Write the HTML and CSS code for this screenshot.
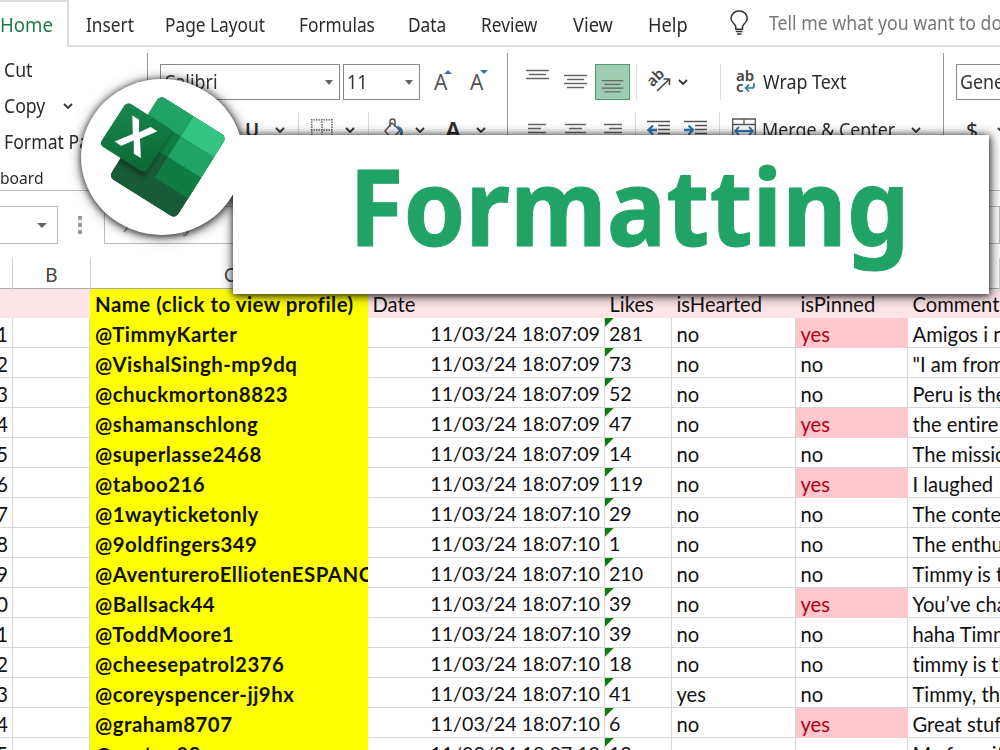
FILE: index.html
```
<!DOCTYPE html>
<html lang="en">
<head>
<meta charset="utf-8">
<title>Formatting</title>
<link rel="stylesheet" href="styles.css">
</head>
<body>
<div class="app">
  <nav class="tabs">
    <a class="tab active"><span>Home</span></a>
    <a class="tab"><span>Insert</span></a>
    <a class="tab"><span>Page Layout</span></a>
    <a class="tab"><span>Formulas</span></a>
    <a class="tab"><span>Data</span></a>
    <a class="tab"><span>Review</span></a>
    <a class="tab view"><span>View</span></a>
    <a class="tab view"><span>Help</span></a>
    <svg class="bulb" width="39" height="47" viewBox="0 0 39 47" fill="none" stroke="#333" stroke-width="1.6"><path d="M5.200 30.500v-2.500c0-2.400-5-4.500-5-8.800a8.400 7.700 0 0 1 17 0c0 4.300-5 6.400-5 8.800v2.500zM5.200 33h7M6.500 35.500h4.600"/></svg>
    <a class="tell"><span>Tell me what you want to do</span></a>
  </nav>

  <section class="ribbon">
    <div class="group clipboard">
      <div class="line"><span>Cut</span></div>
      <div class="line"><span>Copy</span><svg class="chev" width="10" height="6" viewBox="0 0 10 6"><path d="M1 1l4 4 4-4"/></svg></div>
      <div class="line"><span>Format Painter</span></div>
      <div class="line caption"><span>board</span></div>
    </div>

    <div class="group font">
      <div class="row">
        <div class="box face"><span>Calibri</span><i class="arrow"></i></div>
        <div class="box size"><span>11</span><i class="arrow"></i></div>
        <div class="glyph grow">A<svg width="8" height="4" viewBox="0 0 8 4"><path d="M0 4L4 0l4 4z"/></svg></div>
        <div class="glyph shrink">A<svg width="8" height="4" viewBox="0 0 8 4"><path d="M0 0l4 4 4-4z"/></svg></div>
      </div>
      <div class="row second">
        <b class="under">U</b>
        <svg class="chev" width="10" height="6" viewBox="0 0 10 6"><path d="M1 1l4 4 4-4"/></svg>
        <i class="sep"></i>
        <svg width="22" height="22" viewBox="0 0 22 22" fill="none" stroke="#555" stroke-width="1.300" stroke-dasharray="1.500 1"><path d="M.8 0v22M11 0v22M21 0v22M0 .8h22M0 11h22"/></svg>
        <svg class="chev" width="10" height="6" viewBox="0 0 10 6"><path d="M1 1l4 4 4-4"/></svg>
        <i class="sep"></i>
        <svg class="bucket" width="21" height="24" viewBox="0 0 21 24" fill="none"><path d="M6 9V3.500Q6 1 8.500 1T11 3.500V9M8 5L1 13l7 8 8-8.500z" stroke="#555" stroke-width="1.500"/><path d="M12 8q7 0 7 7 0 3-2 6-2.500-2-.5-8z" fill="#2e74b5"/></svg>
        <svg class="chev" width="10" height="6" viewBox="0 0 10 6"><path d="M1 1l4 4 4-4"/></svg>
        <b class="color">A</b>
        <svg class="chev" width="10" height="6" viewBox="0 0 10 6"><path d="M1 1l4 4 4-4"/></svg>
      </div>
    </div>

    <div class="group align">
      <div class="row">
        <svg class="lines" width="24" height="36" viewBox="0 0 24 36"><path d="M1 6.500h23M4 10.500h17M1 14.500h23"/></svg>
        <svg class="lines" width="24" height="36" viewBox="0 0 24 36"><path d="M1 11.500h23M4 15.500h17M1 19.500h23M4 23.500h17"/></svg>
        <svg class="lines on" width="35" height="36" viewBox="0 0 35 36"><path d="M6 16.500h23M9 20.500h17M6 24.500h23M9 28.500h17"/></svg>
        <i class="sep"></i>
        <svg class="orient" width="26" height="24" viewBox="0 0 26 24"><text x="0" y="0" transform="translate(5.500 17.500) rotate(-45)">ab</text><path d="M10 21L22 9.500M16.500 9h6v6" fill="none" stroke="#444" stroke-width="1.600"/></svg>
        <svg class="chev" width="10" height="6" viewBox="0 0 10 6"><path d="M1 1l4 4 4-4"/></svg>
        <i class="sep tall"></i>
        <svg class="wrap" width="21" height="24" viewBox="0 0 21 24"><text x="0" y="11">ab</text><text x="0" y="22">c</text><path d="M18 13v3q0 2-2 2h-6M13 14.500L9.500 18l3.500 3.500" fill="none" stroke="#2e74b5" stroke-width="1.700"/></svg>
        <span class="label">Wrap Text</span>
      </div>
      <div class="row second">
        <svg class="lines" width="24" height="22" viewBox="0 0 24 22"><path d="M3 5.500h18M3 9.500h13M3 13.500h18"/></svg>
        <svg class="lines" width="24" height="22" viewBox="0 0 24 22"><path d="M2 5.500h21M6 9.500h13M2 13.500h21"/></svg>
        <svg class="lines right" width="24" height="22" viewBox="0 0 24 22"><path d="M3 5.500h18M8 9.500h13M3 13.500h18"/></svg>
        <i class="sep"></i>
        <svg class="indent" width="23" height="22" viewBox="0 0 23 22"><path d="M0 2.500h23M11 6.500h12M11 10.500h12M11 14.500h12" stroke="#555" stroke-width="1.500"/><path d="M10 11H2M6 6.500L1.500 11 6 15.500" fill="none" stroke="#2e74b5" stroke-width="2.400"/></svg>
        <svg class="indent" width="23" height="22" viewBox="0 0 23 22"><path d="M0 2.500h23M11 6.500h12M11 10.500h12M11 14.500h12" stroke="#555" stroke-width="1.500"/><path d="M0 11h8M4.500 6.500L9 11l-4.500 4.500" fill="none" stroke="#2e74b5" stroke-width="2.400"/></svg>
        <i class="sep tall"></i>
        <svg class="merge" width="24" height="24" viewBox="0 0 24 24" fill="none" stroke="#555" stroke-width="1.300"><path d="M.7 23V1h22.600v22M.7 6.500h22.600M12 1v5.500"/><path d="M3 13h18M7 9l-4 4 4 4M17 9l4 4-4 4" stroke="#2e74b5" stroke-width="1.800"/></svg>
        <span class="label">Merge &amp; Center</span>
        <svg class="chev" width="10" height="6" viewBox="0 0 10 6"><path d="M1 1l4 4 4-4"/></svg>
      </div>
    </div>

    <div class="group number">
      <div class="row"><div class="box general"><span>General</span></div></div>
      <div class="row second"><span class="dollar">$</span><svg class="chev" width="10" height="6" viewBox="0 0 10 6"><path d="M1 1l4 4 4-4"/></svg></div>
    </div>
  </section>

  <section class="formula">
    <div class="namebox"><i class="arrow"></i></div>
    <div class="dots"><i></i><i></i><i></i></div>
    <div class="fx"><svg width="90" height="24" viewBox="0 0 90 24" fill="none" stroke="#999" stroke-width="2"><path d="M11 10L6 17M65 20q3 2 5-4"/></svg></div>
  </section>

  <div class="colheads"><span></span><span>B</span><span>C</span></div>

  <table class="sheet">
    <colgroup><col class="c-a"><col class="c-b"><col class="c-name"><col class="c-date"><col class="c-likes"><col class="c-heart"><col class="c-pin"><col class="c-com"></colgroup>
    <thead>
      <tr><th></th><th></th><th class="name">Name (click to view profile)</th><th>Date</th><th>Likes</th><th>isHearted</th><th>isPinned</th><th>Comment</th></tr>
    </thead>
    <tbody>
      <tr><td>1</td><td></td><td>@TimmyKarter</td><td>11/03/24 18:07:09</td><td>281</td><td>no</td><td class="yes">yes</td><td>Amigos i no</td></tr>
      <tr><td>2</td><td></td><td>@VishalSingh-mp9dq</td><td>11/03/24 18:07:09</td><td>73</td><td>no</td><td>no</td><td>"I am from</td></tr>
      <tr><td>3</td><td></td><td>@chuckmorton8823</td><td>11/03/24 18:07:09</td><td>52</td><td>no</td><td>no</td><td>Peru is the</td></tr>
      <tr><td>4</td><td></td><td>@shamanschlong</td><td>11/03/24 18:07:09</td><td>47</td><td>no</td><td class="yes">yes</td><td>the entire</td></tr>
      <tr><td>5</td><td></td><td>@superlasse2468</td><td>11/03/24 18:07:09</td><td>14</td><td>no</td><td>no</td><td>The mission</td></tr>
      <tr><td>6</td><td></td><td>@taboo216</td><td>11/03/24 18:07:09</td><td>119</td><td>no</td><td class="yes">yes</td><td>I laughed</td></tr>
      <tr><td>7</td><td></td><td>@1wayticketonly</td><td>11/03/24 18:07:10</td><td>29</td><td>no</td><td>no</td><td>The content</td></tr>
      <tr><td>8</td><td></td><td>@9oldfingers349</td><td>11/03/24 18:07:10</td><td>1</td><td>no</td><td>no</td><td>The enthusiasm</td></tr>
      <tr><td>9</td><td></td><td>@AventureroElliotenESPANOL</td><td>11/03/24 18:07:10</td><td>210</td><td>no</td><td>no</td><td>Timmy is the</td></tr>
      <tr><td>10</td><td></td><td>@Ballsack44</td><td>11/03/24 18:07:10</td><td>39</td><td>no</td><td class="yes">yes</td><td>You’ve changed</td></tr>
      <tr><td>11</td><td></td><td>@ToddMoore1</td><td>11/03/24 18:07:10</td><td>39</td><td>no</td><td>no</td><td>haha Timmy</td></tr>
      <tr><td>12</td><td></td><td>@cheesepatrol2376</td><td>11/03/24 18:07:10</td><td>18</td><td>no</td><td>no</td><td>timmy is the</td></tr>
      <tr><td>13</td><td></td><td>@coreyspencer-jj9hx</td><td>11/03/24 18:07:10</td><td>41</td><td>yes</td><td>no</td><td>Timmy, this</td></tr>
      <tr><td>14</td><td></td><td>@graham8707</td><td>11/03/24 18:07:10</td><td>6</td><td>no</td><td class="yes">yes</td><td>Great stuff</td></tr>
      <tr><td>15</td><td></td><td>@gaston98</td><td>11/03/24 18:07:10</td><td>12</td><td>no</td><td>no</td><td>My favorite</td></tr>
    </tbody>
  </table>

  <div class="overlay">
    <div class="disc">
      <svg width="162" height="156" viewBox="81 79 162 156">
        <defs>
          <clipPath id="sheet"><rect width="100" height="100" rx="7"/></clipPath>
          <linearGradient id="tile" x1="0" y1="0" x2="1" y2="1"><stop offset="0" stop-color="#18884f"/><stop offset="1" stop-color="#0b6631"/></linearGradient>
          <filter id="soft" x="-30%" y="-30%" width="160%" height="160%"><feGaussianBlur stdDeviation="3"/></filter>
        </defs>
        <g transform="matrix(.670 .420 -.515 .820 160 95)" clip-path="url(#sheet)">
          <rect width="100" height="100" fill="#185c37"/>
          <rect width="50" height="25" fill="#21a366"/>
          <rect x="50" width="50" height="25" fill="#33c481"/>
          <rect y="25" width="50" height="25" fill="#107c41"/>
          <rect x="50" y="25" width="50" height="25" fill="#21a366"/>
          <rect x="50" y="50" width="50" height="25" fill="#107c41"/>
          <rect x="-20" y="27" width="58" height="54" fill="#000" opacity=".35" filter="url(#soft)"/>
        </g>
        <g transform="matrix(.460 .290 -.280 .430 127 101.500)">
          <rect width="100" height="100" rx="9" fill="url(#tile)"/>
          <text class="mark" x="50" y="79" text-anchor="middle">X</text>
        </g>
      </svg>
    </div>
    <div class="banner"><h1>Formatting</h1></div>
  </div>
</div>
</body>
</html>
```
FILE: styles.css
```
* { box-sizing: border-box; }
body { margin: 0; width: 1000px; height: 750px; overflow: hidden; background: #fff; }
.app { position: relative; width: 1000px; height: 750px; overflow: hidden; font-family: "Noto Sans", "Open Sans", sans-serif; font-size: 19px; color: #2b2b2b; }
.app span { white-space: nowrap; }

/* Tabs */
.tabs { display: grid; grid-template-columns: 69px 79px 134px 109px 73px 92px 75px 99px 39px 1fr; height: 47px; }
.tab, .tell { padding-left: 16.500px; border-bottom: 2px solid #dcdcdc; line-height: 50px; overflow: hidden; }
.tab span, .tell span, .line span, .label { display: inline-block; transform: scaleX(.91); transform-origin: 0 50%; }
.tab.active { padding-left: 0; border: 2px solid #dcdcdc; border-width: 2px 2px 0 0; color: #1e7b48; line-height: 46px; }
.tab.active span { transform: scaleX(.98); }
.tab.view span { transform: scaleX(.96); }
.tell { padding-left: 0; color: #777; line-height: 47px; }
.tell span { transform: scaleX(.93); }
.bulb { border-bottom: 2px solid #dcdcdc; overflow: visible; }

/* Ribbon */
.ribbon { display: grid; grid-template-columns: 148px 360px 436px 56px; height: 144px; border-bottom: 1px solid #bbb; padding-top: 6px; }
.group { overflow: hidden; border-right: 1px solid #999; }
.number { border: 0; }
.row { display: flex; align-items: center; height: 36px; margin-top: 11px; }
.row.second { margin-top: 12px; }
.row > * { flex: none; }
.line { display: flex; align-items: center; height: 36px; padding-left: 3.500px; }
.line span { transform: scaleX(.93); }
.clipboard .line:first-child { margin-top: -1px; }
.line .chev { margin-left: 14.500px; }
.line.caption { font-size: 17px; padding-left: 0; height: 35px; }
.line.caption span { transform: scaleX(.92); }
.chev path { fill: none; stroke: #333; stroke-width: 1.800; }
.box { display: flex; align-items: center; justify-content: space-between; height: 36px; border: 1px solid #888; padding: 0 6px 0 3px; color: #333; }
.box span { transform: scaleX(.94); transform-origin: 0 50%; }
.arrow { width: 0; height: 0; border: 4px solid transparent; border-top: 5px solid #666; border-bottom: 0; }
.face { width: 180px; margin-left: 12px; }
.size { width: 77px; margin-left: 3px; }
.glyph { position: relative; width: 20px; margin-left: 14px; font-size: 21px; color: #555; line-height: 36px; }
.glyph svg { position: absolute; left: 10px; top: 6px; fill: #2e74b5; }
.shrink { margin-left: 16px; }
.sep { width: 1px; height: 36px; background: #ddd; }
.under { width: 14px; margin-left: 97px; font-weight: 600; text-decoration: underline; }
.under + .chev { margin-left: 16px; }
.font .second .sep { margin-left: 13px; }
.font .second .sep + svg { margin-left: 12px; }
.font .second svg + .chev { margin-left: 12px; }
.font .second .sep + .bucket { margin-left: 15px; }
.font .second .bucket + .chev { margin-left: 10px; }
.color { margin-left: 20px; width: 16px; font-size: 24px; font-weight: 600; line-height: 30px; }
.color + .chev { margin-left: 15px; }
.lines path { stroke: #666; stroke-width: 1.500; }
.align .lines:first-child { margin-left: 17px; }
.lines + .lines { margin-left: 14px; }
.lines.on { margin-left: 8px; background: #9fcdb3; border: 1px solid #4c9c6c; }
.lines + .sep { margin-left: 6px; }
.lines.right + .sep { margin-left: 10px; }
.orient { margin-left: 10px; }
.orient text, .wrap text { font: 600 15px "Noto Sans", sans-serif; fill: #444; }
.orient + .chev { margin-left: 5px; }
.tall { margin-left: 32px; }
.wrap { margin-left: 15px; }
.label { margin-left: 6px; transform: scaleX(.94); }
.lines.right { margin-left: 14px; }
.indent { margin-left: 11px; }
.indent + .indent { margin-left: 14px; }
.indent + .tall { margin-left: 12px; }
.merge { margin-left: 12px; }
.merge + .label { width: 133px; }
.label + .chev { margin-left: 16px; }
.general { width: 70px; margin-left: 12px; }
.dollar { margin-left: 22px; width: 14px; font-size: 21px; }
.dollar + .chev { margin-left: 17px; }

/* Formula bar */
.formula { display: flex; height: 67px; padding-top: 15px; }
.namebox { display: flex; align-items: center; justify-content: flex-end; width: 58px; height: 38px; padding-right: 10px; border: 1px solid #bbb; border-left: 0; }
.namebox .arrow { border-width: 5px 5px 0; }
.dots { display: flex; flex-direction: column; gap: 3px; width: 46px; padding: 10px 0 0 20px; }
.dots i { width: 4px; height: 4px; background: #999; }
.fx { flex: 1; height: 38px; border: 1px solid #bbb; padding: 8px 13px; }

/* Sheet */
.colheads { display: grid; grid-template-columns: 13px 78px 1fr; height: 31px; border-bottom: 1px solid #aaa; font: 19px/33px Lato, sans-serif; color: #444; }
.colheads span { border-right: 1px solid #d0d0d0; text-align: center; }
.colheads span:last-child { text-align: left; padding-left: 133px; }
.sheet { width: 1100px; table-layout: fixed; border-collapse: separate; border-spacing: 0; font: 20.200px Lato, "Noto Sans", sans-serif; font-variant-ligatures: none; color: #111; }
.c-a { width: 13px; } .c-b { width: 77px; } .c-name { width: 278px; } .c-date { width: 237px; }
.c-likes { width: 67px; } .c-heart { width: 124px; } .c-pin { width: 112px; } .c-com { width: 192px; }
.sheet th, .sheet td { height: 30px; padding: 3px 4px 0 4.500px; line-height: 26px; overflow: hidden; white-space: nowrap; text-align: left; vertical-align: top; border: solid #d6d6d6; border-width: 0 1px 1px 0; }
.sheet th { height: 29px; padding-top: 2px; background: #fde4e6; border: 0; font-weight: 400; }
.sheet th.name, .sheet td:nth-child(3) { padding-left: 5px; padding-right: 0; background: #ff0; border: 0; font-size: 20.400px; font-weight: 700; letter-spacing: .5px; }
.sheet td:first-child { padding: 3px 5px 0 0; direction: rtl; }
.sheet td:nth-child(4) { text-align: right; font-size: 19.700px; }
.sheet td:nth-child(5) { padding-left: 4px; background: linear-gradient(135deg, #107c10 6px, transparent 6.500px) no-repeat; font-size: 19.600px; }
.sheet td.yes { background: #ffc7ce; color: #b00012; border-color: #ffc7ce; }

/* Overlay */
.overlay { position: absolute; left: 81px; top: 79px; width: 908px; height: 216px; filter: drop-shadow(0 1px 3px rgba(0,0,0,.6)) drop-shadow(1px 1px 6px rgba(0,0,0,.65)); }
.disc { width: 162px; height: 156px; border-radius: 50%; background: #fff; overflow: hidden; }
.disc svg { display: block; }
.mark { font: 700 86px "Noto Sans", sans-serif; fill: #fff; }
.banner { position: absolute; left: 151.500px; top: 56px; width: 756.500px; height: 158.500px; background: #fff; }
.banner h1 { margin: 0; padding-left: 116px; font: 700 106px/140px "Noto Sans", sans-serif; color: #21a366; white-space: nowrap; transform: scaleX(.937); transform-origin: 116px 50%; -webkit-text-stroke: 1px #21a366; }
```
